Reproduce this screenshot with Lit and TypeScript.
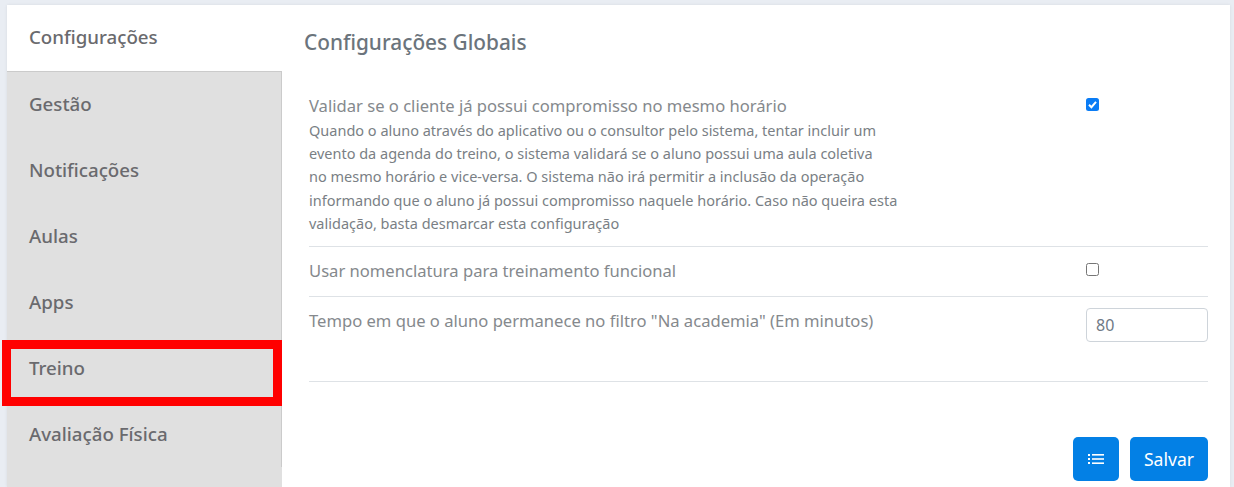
import { LitElement, html, css } from "lit";
import { customElement } from "lit/decorators.js";

const TABS = ["Configurações", "Gestão", "Notificações", "Aulas", "Apps", "Treino", "Avaliação Física"];

@customElement("app-root")
export class AppRoot extends LitElement {
  static styles = css`
    :host {
      display: block;
      height: 487px;
      overflow: hidden;
      position: relative;
      background: #e9edf3;
      font-family: "Noto Sans", sans-serif;
      padding: 5px 4px 0 7px;
      box-sizing: border-box;
    }
    .card {
      display: flex;
      height: 482px;
      background: #fff;
      box-shadow: 0 0 3px rgba(0, 0, 0, 0.08);
    }
    .side {
      width: 275px;
      flex: none;
      background: #e0e0e0;
    }
    .tab {
      height: 66px;
      box-sizing: border-box;
      padding: 19px 0 0 22px;
      font-size: 18.7px;
      line-height: 28px;
      font-weight: 500;
      color: #6a6a6e;
      border-right: 1px solid #cbcbcb;
    }
    .tab.active {
      background: #fff;
      border-right: none;
      border-bottom: 1px solid #cbcbcb;
      height: 67px;
      padding-top: 18px;
    }
    .tab.first-after {
      height: 65px;
      padding-top: 18px;
    }
    .content {
      flex: 1;
      padding: 21px 22px 0 22px;
      min-width: 0;
    }
    h2 {
      margin: 0 0 36px;
      font-size: 20.8px;
      line-height: 32px;
      font-weight: 500;
      color: #6b747c;
    }
    .row {
      display: flex;
      justify-content: space-between;
      margin-left: 5px;
      border-bottom: 1px solid #dee2e6;
    }
    .row.one {
      height: 152px;
    }
    .row.two {
      height: 49px;
    }
    .row.three {
      height: 84px;
    }
    .label {
      font-size: 16.6px;
      line-height: 24px;
      color: #85898d;
    }
    .row.one .label {
      margin-bottom: 1px;
    }
    .row.two .label,
    .row.three .label {
      padding-top: 12px;
    }
    .hint {
      font-size: 14.5px;
      line-height: 23.2px;
      color: #7a7f85;
    }
    .ctl {
      width: 122px;
      flex: none;
    }
    .box {
      display: block;
      width: 13px;
      height: 13px;
      box-sizing: border-box;
      border-radius: 2.5px;
    }
    .box.on {
      margin-top: 4px;
      background: #0a7cf5;
    }
    .box.on svg {
      display: block;
    }
    .box.off {
      margin-top: 16px;
      border: 1px solid #767676;
    }
    .num {
      margin-top: 11px;
      width: 122px;
      height: 34px;
      box-sizing: border-box;
      border: 1px solid #ced4da;
      border-radius: 4px;
      padding: 0 9px;
      font-size: 16px;
      line-height: 32px;
      color: #6f7a86;
    }
    .actions {
      display: flex;
      justify-content: flex-end;
      gap: 11px;
      margin-top: 55px;
    }
    .btn {
      height: 44px;
      border-radius: 5px;
      background: #0380e5;
      color: #fff;
      font-size: 17.6px;
      display: flex;
      align-items: center;
      justify-content: center;
    }
    .btn.icon {
      width: 46px;
    }
    .btn.save {
      width: 78px;
    }
    .mark {
      position: absolute;
      left: 2px;
      top: 340px;
      width: 280px;
      height: 66px;
      box-sizing: border-box;
      border: 9px solid #ff0000;
    }
  `;

  render() {
    return html`
      <div class="card">
        <div class="side">
          ${TABS.map((t, i) => html`<div class="tab ${i == 0 ? "active" : ""} ${i == 1 ? "first-after" : ""}">${t}</div>`)}
        </div>
        <div class="content">
          <h2>Configurações Globais</h2>
          <div class="row one">
            <div>
              <div class="label">Validar se o cliente já possui compromisso no mesmo horário</div>
              <div class="hint">
                Quando o aluno através do aplicativo ou o consultor pelo sistema, tentar incluir um<br />
                evento da agenda do treino, o sistema validará se o aluno possui uma aula coletiva<br />
                no mesmo horário e vice-versa. O sistema não irá permitir a inclusão da operação<br />
                informando que o aluno já possui compromisso naquele horário. Caso não queira esta<br />
                validação, basta desmarcar esta configuração
              </div>
            </div>
            <div class="ctl">
              <span class="box on">
                <svg width="13" height="13" viewBox="0 0 13 13"><path d="M3 6.8l2.4 2.4L10 3.9" fill="none" stroke="#fff" stroke-width="2" /></svg>
              </span>
            </div>
          </div>
          <div class="row two">
            <div class="label">Usar nomenclatura para treinamento funcional</div>
            <div class="ctl"><span class="box off"></span></div>
          </div>
          <div class="row three">
            <div class="label">Tempo em que o aluno permanece no filtro "Na academia" (Em minutos)</div>
            <div class="ctl"><div class="num">80</div></div>
          </div>
          <div class="actions">
            <div class="btn icon">
              <svg width="16" height="12" viewBox="0 0 16 12" fill="#fff">
                <rect x="0" y="1" width="2" height="2" />
                <rect x="0" y="5" width="2" height="2" />
                <rect x="0" y="9" width="2" height="2" />
                <rect x="4" y="1" width="12" height="1.6" />
                <rect x="4" y="5.2" width="12" height="1.6" />
                <rect x="4" y="9.4" width="12" height="1.6" />
              </svg>
            </div>
            <div class="btn save">Salvar</div>
          </div>
        </div>
      </div>
      <div class="mark"></div>
    `;
  }
}
